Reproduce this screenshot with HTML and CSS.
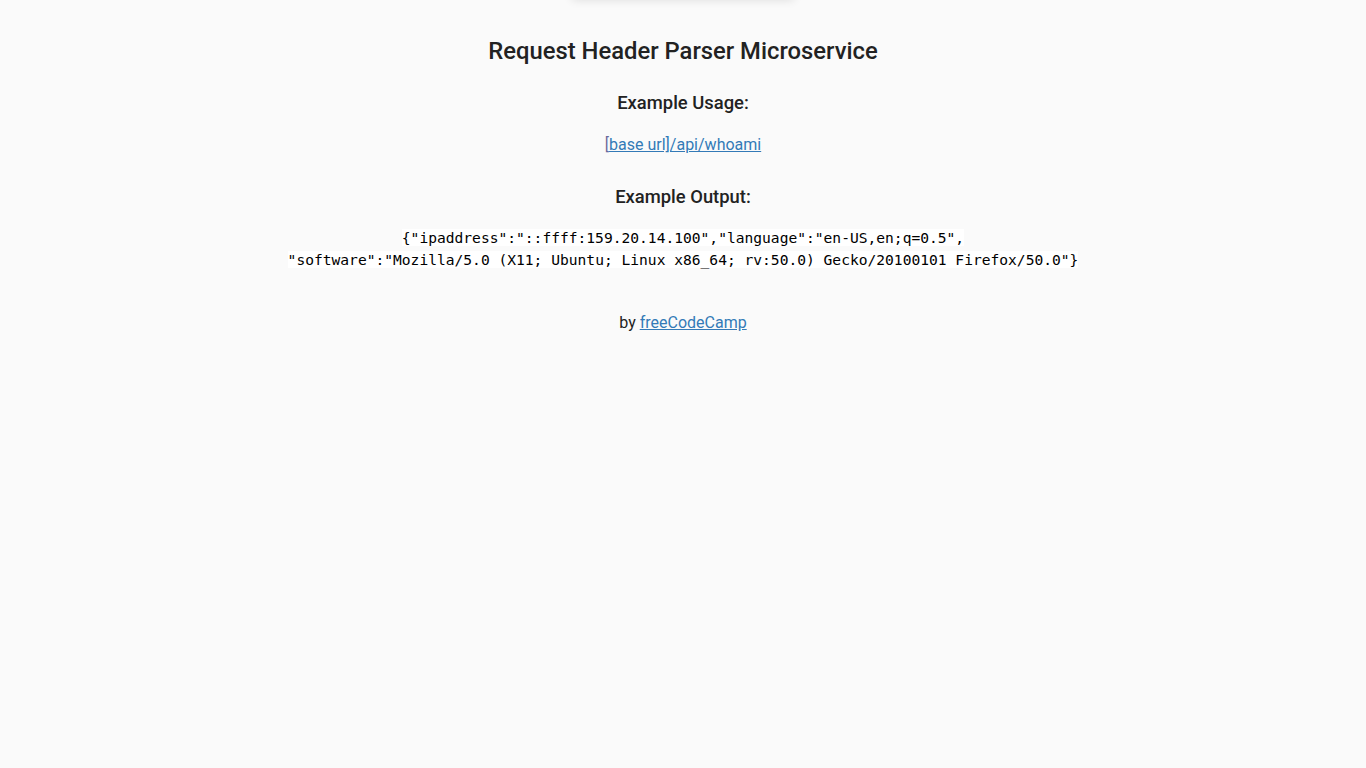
FILE: index.html
```html
<!DOCTYPE html>
<html>
<head>
<meta charset="utf-8">
<title>Request Header Parser</title>
<link rel="stylesheet" href="styles.css">
</head>
<body>
<div class="topbar"></div>
<div class="container">
  <h2 class="title">Request Header Parser Microservice</h2>
  <h3 class="sub">Example Usage:</h3>
  <p class="usage"><a href="#" class="visited">[</a><a href="#">base url]/api/whoami</a></p>
  <h3 class="sub">Example Output:</h3>
  <p class="output"><code>{"ipaddress":"::ffff:159.20.14.100","language":"en-US,en;q=0.5",<br>"software":"Mozilla/5.0 (X11; Ubuntu; Linux x86_64; rv:50.0) Gecko/20100101 Firefox/50.0"}</code></p>
</div>
<div class="footer">
  <p>by <a href="#">freeCodeCamp</a></p>
</div>
</body>
</html>
```
FILE: styles.css
```css
html, body {
  margin: 0;
  padding: 0;
  background: #fafafa;
}
body {
  font-family: Roboto, "Liberation Sans", sans-serif;
  color: #222;
  text-align: center;
}
.topbar {
  width: 222px;
  height: 10px;
  margin: -10px auto 0;
  background: #fafafa;
  box-shadow: 0 0 10px rgba(0,0,0,0.12);
}
.container {
  padding-top: 37px;
}
.title {
  font-size: 23.8px;
  font-weight: 500;
  line-height: 28px;
  margin: 0 0 27px;
}
.sub {
  font-size: 18.4px;
  font-weight: 500;
  line-height: 22px;
  margin: 0;
}
.usage {
  font-size: 16px;
  line-height: 20px;
  margin: 21px 0 31px;
}
a {
  color: #337ab7;
}
a.visited {
  color: #6a6a9a;
}
.output {
  margin: 19px 0 0;
  line-height: 22px;
}
code {
  font-family: "DejaVu Sans Mono", monospace;
  font-size: 14.6px;
  background: #fff;
  color: #000;
}
.footer {
  margin-top: 42px;
}
.footer p {
  margin: 0;
  font-size: 16px;
  line-height: 20px;
}
```
